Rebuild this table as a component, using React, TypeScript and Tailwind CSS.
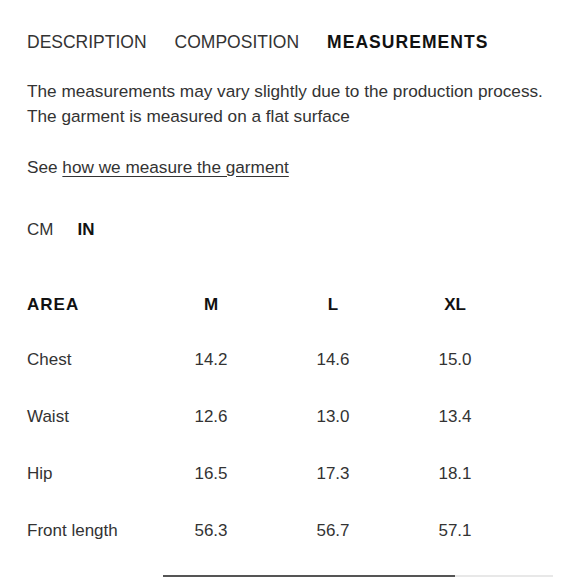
import React from 'react';

const rows = [
  { area: 'Chest', m: '14.2', l: '14.6', xl: '15.0' },
  { area: 'Waist', m: '12.6', l: '13.0', xl: '13.4' },
  { area: 'Hip', m: '16.5', l: '17.3', xl: '18.1' },
  { area: 'Front length', m: '56.3', l: '56.7', xl: '57.1' },
];

export default function App() {
  return (
    <div className="w-[580px] h-[580px] bg-white overflow-hidden font-['Liberation_Sans',Arial,sans-serif] text-[#1a1a1a]">
      {/* Tabs */}
      <div className="flex items-center gap-[28px] px-[27px] h-[30px] mt-[27px] text-[17.5px]">
        <span className="text-[#333]">DESCRIPTION</span>
        <span className="text-[#333]">COMPOSITION</span>
        <span className="font-bold tracking-[0.06em] text-[#111]">MEASUREMENTS</span>
      </div>

      {/* Intro */}
      <div className="px-[27px] mt-[22px] text-[17.2px] leading-[25px] text-[#333]">
        <p className="whitespace-nowrap">The measurements may vary slightly due to the production process.</p>
        <p>The garment is measured on a flat surface</p>
      </div>
      <p className="px-[27px] mt-[26px] text-[17.2px] leading-[25px] text-[#333]">
        See <span className="underline underline-offset-[3px]">how we measure the garment</span>
      </p>

      {/* Units */}
      <div className="flex items-center gap-[24px] px-[27px] mt-[37px] h-[25px] text-[17px]">
        <span className="text-[#333]">CM</span>
        <span className="font-bold text-[#111]">IN</span>
      </div>

      {/* Table */}
      <div className="mt-[36px] px-[27px] grid grid-cols-[123px_122px_122px_122px] text-[17px] text-[#333]">
        <div className="h-[53px] flex items-center font-bold tracking-[0.06em] text-[#111]">AREA</div>
        <div className="h-[53px] flex items-center justify-center font-bold text-[#111]">M</div>
        <div className="h-[53px] flex items-center justify-center font-bold text-[#111]">L</div>
        <div className="h-[53px] flex items-center justify-center font-bold text-[#111]">XL</div>
        {rows.map((r) => (
          <React.Fragment key={r.area}>
            <div className="h-[57px] flex items-center whitespace-nowrap">{r.area}</div>
            <div className="h-[57px] flex items-center justify-center">{r.m}</div>
            <div className="h-[57px] flex items-center justify-center">{r.l}</div>
            <div className="h-[57px] flex items-center justify-center">{r.xl}</div>
          </React.Fragment>
        ))}
      </div>

      {/* Scroll indicator */}
      <div className="ml-[163px] mt-[16px] w-[390px] h-[2px] bg-[#e8e8e8] flex">
        <div className="w-[292px] h-full bg-[#555]" />
      </div>
    </div>
  );
}
